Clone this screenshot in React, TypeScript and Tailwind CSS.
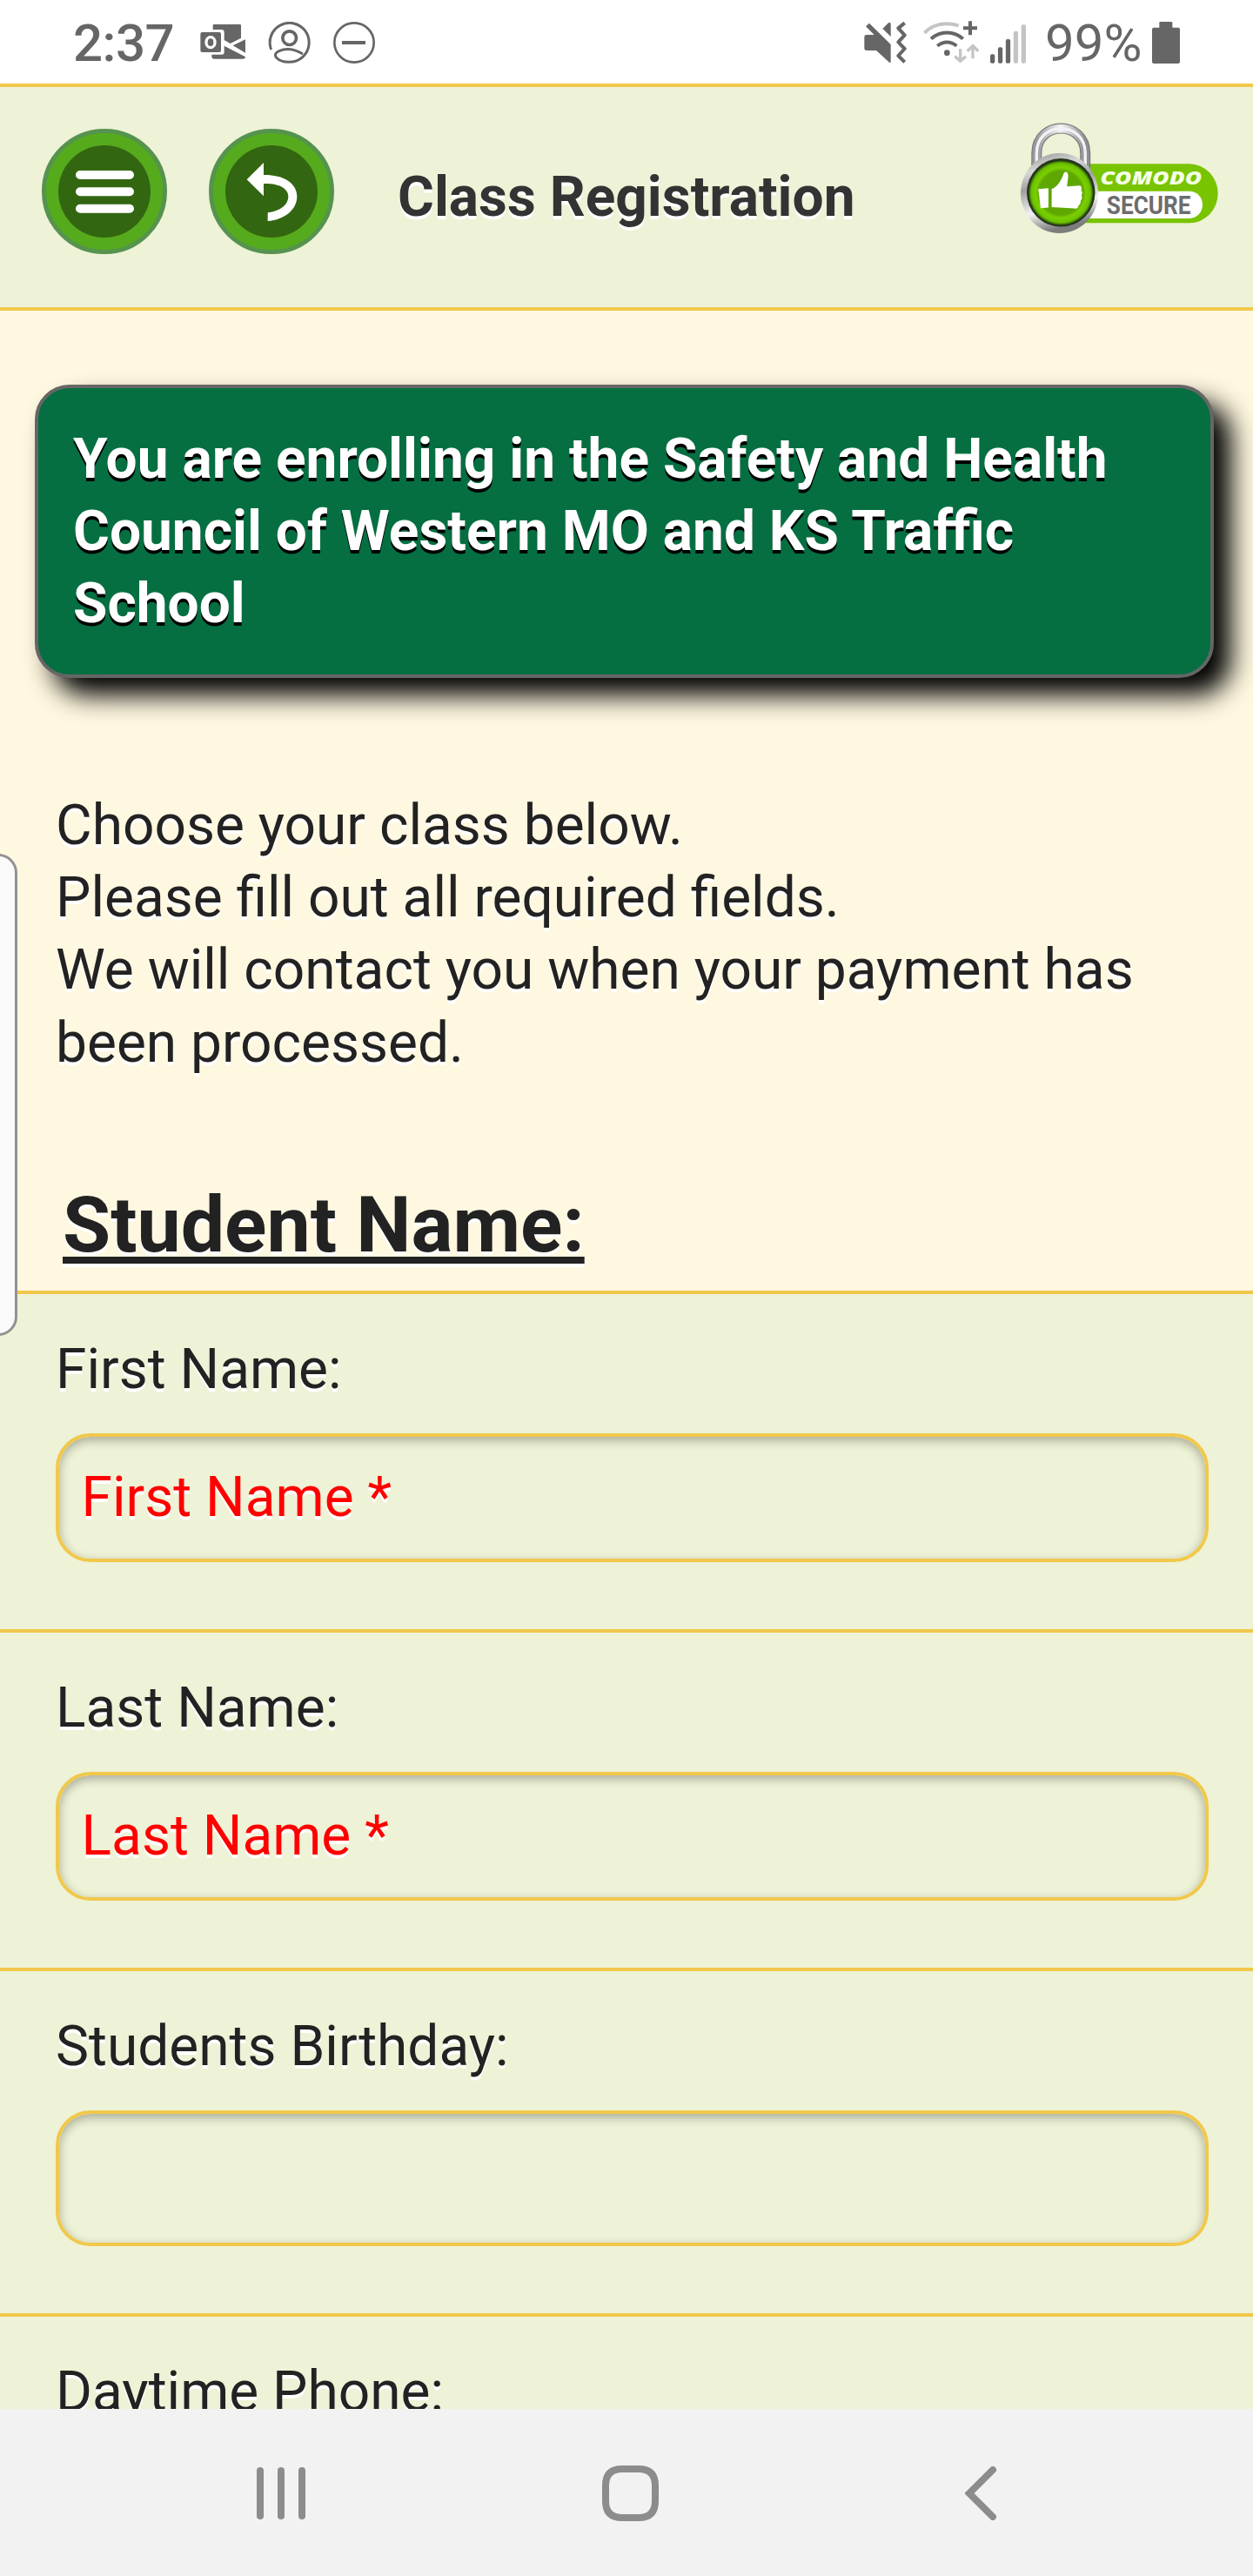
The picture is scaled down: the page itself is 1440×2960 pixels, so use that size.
import type { ReactNode } from 'react';

function OutlookIcon() {
  return (
    <svg viewBox="690 75 156 147" className="h-[49px] w-[52px] fill-[#666]">
      <path d="M734 102V88q0-4 4-4h89q4 0 4 4v43l-37 19-21-12v-26q0-10-10-10z" />
      <path d="M846 136v46l-43-25z" />
      <path d="M730 188h35q8 0 8-8v-22l73 38q0 7-7 7H737q-7 0-7-7z" />
      <rect x="691" y="111" width="71" height="69" rx="6" />
      <ellipse cx="726" cy="146" rx="20" ry="23" fill="#fff" />
      <ellipse cx="726" cy="146" rx="10" ry="13" />
    </svg>
  );
}

function AccountIcon() {
  return (
    <svg viewBox="924 75 147 147" className="h-[49px] w-[49px] fill-none stroke-[#666]">
      <path
        d="M935 171A67.5 67.5 0 1 1 1044 196C1018 220 972 219 953 199C945 189 951 181 962 176C985 166 1010 166 1044 186"
        strokeWidth="9"
      />
      <circle cx="998" cy="131" r="23.500" strokeWidth="11" />
    </svg>
  );
}

function DoNotDisturbIcon() {
  return (
    <svg viewBox="1152 75 144 147" className="h-[49px] w-12 fill-none stroke-[#666]">
      <circle cx="1224" cy="147" r="68" strokeWidth="8" />
      <path d="M1182 147h81" strokeWidth="12" />
    </svg>
  );
}

function MuteVibrateIcon() {
  return (
    <svg viewBox="99 75 147 147" className="h-[49px] w-[49px] fill-[#666]">
      <path d="M105 91l12-11 74 73v62h-5l-45-41h-33q-8 0-8-8v-38q0-8 8-8h26z" />
      <path d="M163 99l20-20q8-3 8 3v44z" />
      <path d="M239 79l-22 18 22 24-22 24 22 23-22 24 22 22" fill="none" stroke="#666" strokeWidth="12" strokeLinejoin="round" />
    </svg>
  );
}

function WifiIcon() {
  return (
    <svg viewBox="303 72 192 150" className="h-[50px] w-16 fill-none" strokeWidth="12">
      <path d="M307 114C335 83 378 75 425 88" stroke="#c4c4c4" />
      <path d="M330 134C360 105 410 105 440 134M352 158C372 141 398 141 418 158" stroke="#666" />
      <circle cx="385" cy="182" r="10" fill="#666" />
      <path d="M441 97h48M465 73v48" stroke="#666" />
      <path d="M431 169v42M412 194l19 17 19-17M474 202v-42M455 176l19-18 19 18" stroke="#c4c4c4" strokeWidth="10" />
    </svg>
  );
}

function SignalIcon() {
  return (
    <svg viewBox="534 75 124 147" className="h-[49px] w-[41px] fill-[#666]">
      <rect x="534" y="187" width="16" height="32" rx="6" />
      <rect x="561" y="163" width="16" height="56" rx="6" />
      <rect x="588" y="135" width="16" height="84" rx="6" />
      <rect x="615" y="107" width="16" height="112" rx="6" fill="#c4c4c4" />
      <rect x="642" y="84" width="16" height="135" rx="6" fill="#c4c4c4" />
    </svg>
  );
}

function BatteryIcon() {
  return (
    <svg viewBox="1092 75 96 147" className="h-[49px] w-8 fill-[#666]">
      <rect x="1092" y="95" width="96" height="124" rx="6" />
      <rect x="1117" y="75" width="45" height="30" rx="4" />
    </svg>
  );
}

function ComodoBadge() {
  return (
    <svg viewBox="630 420 700 390" className="h-[130px] w-[233px]">
      <defs>
        <linearGradient id="shackle" x1="0" x2="1" y1="0" y2="0">
          <stop offset="0" stopColor="#9a9a9e" />
          <stop offset="0.5" stopColor="#f4f4f6" />
          <stop offset="1" stopColor="#8e8e92" />
        </linearGradient>
        <linearGradient id="rim" x1="0" x2="0.25" y1="0" y2="1">
          <stop offset="0" stopColor="#8a8a8a" />
          <stop offset="0.25" stopColor="#d8d8d8" />
          <stop offset="0.45" stopColor="#a0a0a0" />
          <stop offset="0.75" stopColor="#f2f2f2" />
          <stop offset="1" stopColor="#7d7d7d" />
        </linearGradient>
        <radialGradient id="face">
          <stop offset="0" stopColor="#5da402" />
          <stop offset="0.68" stopColor="#5fa802" />
          <stop offset="0.78" stopColor="#7ad000" />
          <stop offset="0.92" stopColor="#6cc000" />
          <stop offset="1" stopColor="#2c5a0c" />
        </radialGradient>
      </defs>
      <path d="M780 565H1222A98 102 0 0 1 1222 769H780z" fill="#78c400" />
      <path d="M780 659H1222A45 47 0 0 1 1222 753H780z" fill="#fff" />
      <path d="M694 590V528C694 414 862 414 862 528V590" fill="none" stroke="#77777b" strokeWidth="36" />
      <path d="M694 590V528C694 414 862 414 862 528V590" fill="none" stroke="url(#shackle)" strokeWidth="29" />
      <path d="M694 590V528C694 414 862 414 862 528V590" fill="none" stroke="#f3f3f5" strokeWidth="10" />
      <ellipse cx="773" cy="666" rx="134" ry="138" fill="url(#rim)" />
      <circle cx="778" cy="664" r="118" fill="#26351d" />
      <circle cx="778" cy="665" r="111" fill="url(#face)" />
      <path d="M700 652l35-3v67l-27 2z" fill="#fff" />
      <path
        d="M746 652C768 642 780 620 787 599C793 587 804 592 803 608L799 643L843 640Q852 642 848 656Q855 664 849 674Q854 684 846 692Q847 704 839 708Q838 720 826 719L746 714z"
        fill="#fff"
      />
      <text x="914" y="636" textLength="350" lengthAdjust="spacingAndGlyphs" className="fill-[#f4ffe4] font-['Open_Sans',sans-serif] text-[62px] font-extrabold italic">
        COMODO
      </text>
      <text x="936" y="738" textLength="290" lengthAdjust="spacingAndGlyphs" className="fill-[#6d6d6d] font-[Roboto,sans-serif] text-[91px] font-bold">
        SECURE
      </text>
    </svg>
  );
}

function RoundButton({ label, children }: { label: string; children: ReactNode }) {
  return (
    <button
      aria-label={label}
      className="flex h-36 w-36 items-center justify-center rounded-full border-[5px] border-[#55934f] bg-[#56ab1c]"
    >
      <svg viewBox="201 501 318 318" className="h-[106px] w-[106px]">
        <circle cx="360" cy="660" r="159" fill="#336611" />
        {children}
      </svg>
    </button>
  );
}

const fields = [
  { label: 'First Name:', placeholder: 'First Name *', row: 'h-[389px]', input: 'h-[148px]' },
  { label: 'Last Name:', placeholder: 'Last Name *', row: 'h-[389px]', input: 'h-[148px]' },
  { label: 'Students Birthday:', placeholder: '', row: 'h-[397px]', input: 'h-[156px]' },
  { label: 'Daytime Phone:', placeholder: '', row: 'h-[389px]', input: 'h-[148px]' },
];

function StatusBar() {
  return (
    <div className="flex h-24 shrink-0 items-center bg-white pr-[84px] pl-[84px] text-[60px] leading-none text-[#666]">
      <span className="mt-1 w-[146px] font-medium tracking-[-0.5px]">2:37</span>
      <div className="mt-0.5 flex flex-1 items-center gap-[26px]">
        <OutlookIcon />
        <AccountIcon />
        <DoNotDisturbIcon />
      </div>
      <div className="mt-0.5 flex items-center">
        <MuteVibrateIcon />
        <span className="w-[19px]" />
        <WifiIcon />
        <span className="w-[13px]" />
        <SignalIcon />
        <span className="mt-0.5 w-[145px] pl-[22px]">99%</span>
        <BatteryIcon />
      </div>
    </div>
  );
}

function NavBar() {
  return (
    <div className="relative flex h-48 shrink-0 items-center bg-[#f2f2f2] pt-[2px] pl-[295px]">
      <div className="flex w-[397px] gap-4">
        <span className="h-[60px] w-2 rounded-full bg-[#8c8c8c]" />
        <span className="h-[60px] w-2 rounded-full bg-[#8c8c8c]" />
        <span className="h-[60px] w-2 rounded-full bg-[#8c8c8c]" />
      </div>
      <div className="w-[417px]">
        <svg viewBox="0 0 65 64" className="h-16 w-[65px] fill-none stroke-[#8c8c8c]">
          <path d="M23 4H42Q61 4 61 23V41Q61 60 42 60H23Q4 60 4 41V23Q4 4 23 4z" strokeWidth="8" />
        </svg>
      </div>
      <svg viewBox="0 0 37 62" className="h-[62px] w-[37px] fill-none stroke-[#8c8c8c]">
        <path d="M32 4L5 31L32 58" strokeWidth="8" strokeLinecap="round" />
      </svg>
    </div>
  );
}

export default function App() {
  return (
    <div className="flex h-[2960px] w-[1440px] flex-col overflow-hidden bg-[#fff8e0] font-[Roboto,sans-serif] text-[64px] leading-[83.2px] text-[#222]">
      <StatusBar />

      <header className="flex h-[261px] shrink-0 items-start border-y-4 border-[#f1c84b] bg-[#eef2d6] pr-[37px] pl-12">
        <div className="mt-12 flex gap-12">
          <RoundButton label="Menu">
            <path d="M276 603h171M276 661h171M276 719h171" stroke="#fff" strokeWidth="30" strokeLinecap="round" />
          </RoundButton>
          <RoundButton label="Back">
            <path
              transform="translate(-576 0)"
              d="M851 619L909 561V603C975 602 1024 630 1024 677C1024 722 982 757 923 762V733C966 727 994 706 994 677C994 649 960 631 909 633V676z"
              fill="#fff"
            />
          </RoundButton>
        </div>
        <h1 className="mt-[85px] ml-[73px] flex-1 font-bold text-[#333] [text-shadow:0_4px_0_#fff]">Class Registration</h1>
        <div className="mt-10">
          <ComodoBadge />
        </div>
      </header>

      <main className="relative flex h-[2411px] flex-col overflow-hidden">
        <div className="mt-[85px] ml-10 h-[337px] w-[1355px] shrink-0 rounded-[40px] border-4 border-[#666] bg-[#056f41] p-10 font-bold text-white shadow-[20px_20px_30px_#000] [text-shadow:0_4px_0_#000]">
          You are enrolling in the Safety and Health Council of Western MO and KS Traffic School
        </div>

        <p className="mt-[128px] ml-16 w-[1312px] shrink-0 [text-shadow:0_4px_0_#fff]">
          Choose your class below.
          <br />
          Please fill out all required fields.
          <br />
          We will contact you when your payment has been processed.
        </p>

        <h2 className="mt-[110px] ml-[72px] h-[133px] shrink-0 text-[89.600px] leading-[116px] font-bold underline decoration-8 underline-offset-[6px] [text-decoration-skip-ink:none] [text-shadow:0_4px_0_#fff]">
          Student Name:
        </h2>

        {fields.map((field) => (
          <div key={field.label} className={`${field.row} shrink-0 border-t-4 border-[#f1c84b] bg-[#eef2d6] pt-[45px] pr-[51px] pl-16`}>
            <label className="block h-[115px] [text-shadow:0_4px_0_#fff]">{field.label}</label>
            <input
              type="text"
              placeholder={field.placeholder}
              className={`${field.input} block w-full rounded-[40px] border-4 border-[#f1c84b] bg-[#eef2d6] px-[25.600px] shadow-[inset_0_4px_12px_rgba(0,0,0,0.3)] [text-shadow:0_4px_0_#fff] placeholder:text-[#f00] placeholder:opacity-100`}
            />
          </div>
        ))}

        {/* edge panel handle */}
        <div className="absolute top-[624px] left-[-40px] h-[554px] w-[60px] rounded-[22px] border-[3px] border-[#929292] bg-[#fafafa]" />
      </main>

      <NavBar />
    </div>
  );
}
